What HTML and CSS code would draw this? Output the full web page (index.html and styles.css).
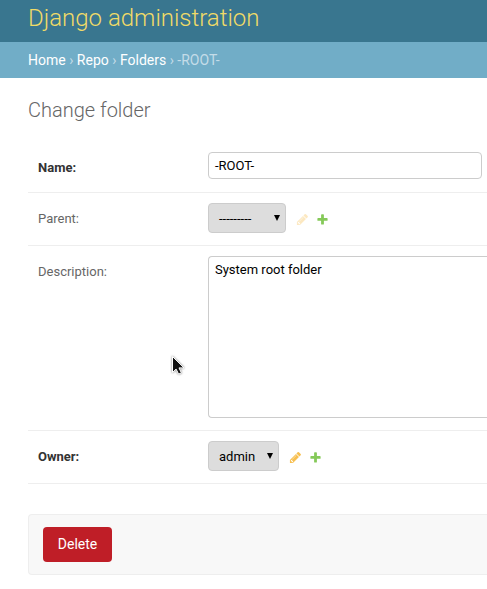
FILE: index.html
```html
<!DOCTYPE html>
<html lang="en">
<head>
<meta charset="utf-8">
<title>Change folder</title>
<link rel="stylesheet" href="styles.css">
</head>
<body>
<svg width="0" height="0" class="defs">
  <symbol id="pencil" viewBox="0 0 1792 1792"><path d="M491 1536l91-91-235-235-91 91v107h128v128h107zm523-928q0-22-22-22-10 0-17 7l-542 542q-7 7-7 17 0 22 22 22 10 0 17-7l542-542q7-7 7-17zm-54-192l416 416-832 832h-416v-416zm683 96q0 53-37 90l-166 166-416-416 166-165q36-38 90-38 53 0 91 38l235 234q37 39 37 91z"/></symbol>
  <symbol id="plus" viewBox="0 0 1792 1792"><path d="M1600 796v192q0 40-28 68t-68 28h-416v416q0 40-28 68t-68 28h-192q-40 0-68-28t-28-68v-416h-416q-40 0-68-28t-28-68v-192q0-40 28-68t68-28h416v-416q0-40 28-68t68-28h192q40 0 68 28t28 68v416h416q40 0 68 28t28 68z"/></symbol>
</svg>
<header class="header">Django administration</header>
<nav class="breadcrumbs"><a>Home</a> › <a>Repo</a> › <a>Folders</a> › -ROOT-</nav>
<main class="content">
  <h1>Change folder</h1>
  <div class="row row-name">
    <label class="required">Name:</label>
    <div class="input">-ROOT-</div>
  </div>
  <div class="row row-select">
    <label>Parent:</label>
    <div class="select select-parent"><span>---------</span><svg class="arrow" viewBox="0 0 6 6"><path d="M0 0h6L3 6z"/></svg></div>
    <svg class="icon pencil disabled"><use href="#pencil"/></svg>
    <svg class="icon plus"><use href="#plus"/></svg>
  </div>
  <div class="row row-description">
    <label>Description:</label>
    <div class="textarea">System root folder</div>
  </div>
  <div class="row row-select">
    <label class="required">Owner:</label>
    <div class="select select-owner"><span>admin</span><svg class="arrow" viewBox="0 0 6 6"><path d="M0 0h6L3 6z"/></svg></div>
    <svg class="icon pencil"><use href="#pencil"/></svg>
    <svg class="icon plus"><use href="#plus"/></svg>
  </div>
  <div class="submit-row"><a class="delete">Delete</a></div>
</main>
<svg class="cursor" viewBox="0 0 14 21"><path d="M1.5 1.5v16l3.6-3.4 2.5 5 2.8-1.2-2.4-5h5z"/></svg>
</body>
</html>
```
FILE: styles.css
```css
* { box-sizing: border-box; }
body {
  margin: 0;
  height: 589px;
  overflow: hidden;
  position: relative;
  background: #fff;
  color: #333;
  font: 13px/16px Roboto, "Liberation Sans", sans-serif;
}
.defs { position: absolute; }
.header {
  height: 42px;
  padding: 3px 28px 0;
  background: #39768f;
  color: #f1db67;
  font-size: 24px;
  line-height: 30px;
  font-weight: 300;
}
.breadcrumbs {
  height: 36px;
  padding: 10px 28px;
  background: #71adc7;
  color: #c4dce8;
  font-size: 14px;
  line-height: 16px;
  font-weight: 400;
  white-space: nowrap;
}
.breadcrumbs a { color: #fff; }
.content { padding: 20px 0 0 28px; }
h1 {
  margin: 0;
  height: 44px;
  font-size: 20px;
  line-height: 24px;
  font-weight: 300;
  color: #666;
}
.row {
  display: flex;
  align-items: flex-start;
  padding: 10px 0 0 10px;
  border-bottom: 1px solid #eee;
}
.row-name { height: 51px; }
.row-select { height: 53px; }
.row-description { height: 185px; }
label {
  flex: 0 0 170px;
  padding-top: 8px;
  color: #666;
}
.required { color: #333; font-weight: 700; }
.input, .textarea {
  border: 1px solid #ccc;
  border-radius: 4px;
  padding: 5px 6px;
  color: #000;
  line-height: 15px;
}
.input { flex: none; width: 274px; height: 27px; }
.textarea {
  flex: 1;
  height: 162px;
  border-right: 0;
  border-radius: 4px 0 0 4px;
}
.select {
  flex: none;
  display: flex;
  align-items: center;
  justify-content: space-between;
  height: 30px;
  padding: 0 5px 0 10px;
  border: 1px solid #ccc;
  border-radius: 4px;
  background: #ddd;
  color: #000;
}
.select span { padding-top: 2px; }
.select-parent { width: 78px; }
.select-owner { width: 71px; }
.arrow { width: 6px; height: 6px; }
.icon { flex: none; width: 13px; height: 13px; margin-top: 10px; }
.pencil { margin-left: 10px; fill: #f7bf4f; }
.plus { margin-left: 7px; fill: #85c959; }
.disabled { opacity: .35; }
.submit-row {
  height: 61px;
  margin-top: 30px;
  padding: 12px 14px;
  border: 1px solid #eee;
  border-right: 0;
  border-radius: 4px 0 0 4px;
  background: #f8f8f8;
}
.delete {
  display: block;
  width: 69px;
  height: 35px;
  border-radius: 4px;
  background: #bf1e27;
  color: #fff;
  font-size: 14px;
  line-height: 35px;
  text-align: center;
}
.cursor {
  position: absolute;
  left: 171px;
  top: 355px;
  width: 14px;
  height: 21px;
  fill: #111;
  stroke: #fff;
  stroke-width: 1;
  filter: drop-shadow(0 0 1px #777);
}
```
